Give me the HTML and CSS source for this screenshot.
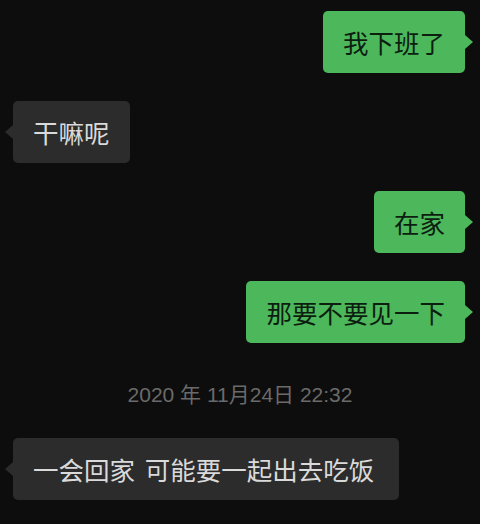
FILE: index.html
```html
<!DOCTYPE html>
<html lang="zh-CN">
<head>
<meta charset="utf-8">
<link rel="stylesheet" href="styles.css">
</head>
<body>
<div class="chat">
  <div class="row me"><div class="bubble green">我下班了</div></div>
  <div class="row other"><div class="bubble gray">干嘛呢</div></div>
  <div class="row me"><div class="bubble green">在家</div></div>
  <div class="row me"><div class="bubble green">那要不要见一下</div></div>
  <div class="time">2020 年 11月24日 22:32</div>
  <div class="row other"><div class="bubble gray wide">一会回家 可能要一起出去吃饭</div></div>
</div>
</body>
</html>
```

FILE: styles.css
```css
html, body {
  margin: 0;
  padding: 0;
  background: #0d0d0d;
}

.chat {
  width: 480px;
  height: 524px;
  box-sizing: border-box;
  padding-top: 11px;
  display: flex;
  flex-direction: column;
  gap: 28px;
  font-family: "Noto Sans CJK SC", "Noto Sans", sans-serif;
}

.row {
  display: flex;
}

.row.me {
  justify-content: flex-end;
  padding-right: 15px;
}

.row.other {
  justify-content: flex-start;
  padding-left: 13px;
}

.bubble {
  position: relative;
  height: 62px;
  display: flex;
  align-items: center;
  padding: 0 20px;
  border-radius: 5px;
  font-size: 25.5px;
  line-height: 1;
  white-space: nowrap;
}

.bubble.wide {
  padding-right: 25px;
  word-spacing: 4px;
}

.bubble.green {
  background: #4cb75b;
  color: #0c1e0f;
}

.bubble.gray {
  background: #2c2c2c;
  color: #dadada;
}

.bubble::after {
  content: "";
  position: absolute;
  top: 50%;
  margin-top: -7px;
  border-top: 7px solid transparent;
  border-bottom: 7px solid transparent;
}

.bubble.green::after {
  right: -8px;
  border-left: 8px solid #4cb75b;
}

.bubble.gray::after {
  left: -8px;
  border-right: 8px solid #2c2c2c;
}

.time {
  margin-top: 9px;
  height: 30px;
  line-height: 30px;
  text-align: center;
  font-size: 21px;
  color: #6a6a6a;
  font-family: "Liberation Sans", "Noto Sans CJK SC", sans-serif;
}
```
